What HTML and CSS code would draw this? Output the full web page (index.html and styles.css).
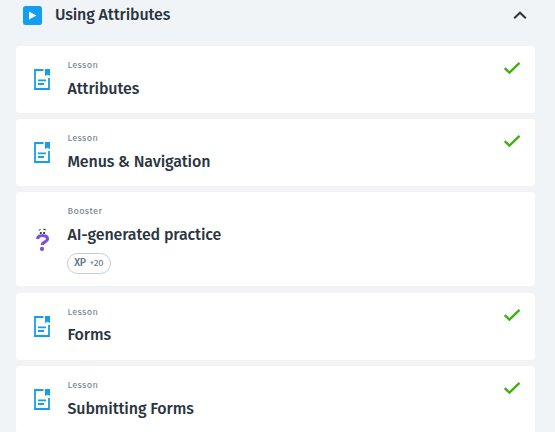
FILE: index.html
```
<!DOCTYPE html>
<html lang="en">
<head>
<meta charset="utf-8">
<title>Using Attributes</title>
<link rel="stylesheet" href="styles.css">
</head>
<body>
<svg class="defs" width="0" height="0" aria-hidden="true">
  <symbol id="doc" viewBox="0 0 16 21">
    <path d="M9.5 1H1v19h14V9" fill="none" stroke="currentColor" stroke-width="1.8"/>
    <path d="M11 0h5v7l-2.5-1.2L11 7z" fill="currentColor"/>
    <path d="M4 11.3h8M4 15h6" fill="none" stroke="currentColor" stroke-width="1.8"/>
  </symbol>
  <symbol id="check" viewBox="0 0 18 14">
    <path d="M1.7 7.2 6.4 11.6 16.5 1.8" fill="none" stroke="currentColor" stroke-width="2.3"/>
  </symbol>
</svg>
<header class="section-header">
  <svg class="play" viewBox="0 0 19 19"><rect width="19" height="19" rx="2.5" fill="#149ef2"/><path d="M6 5.5v8l7.3-4z" fill="#fff"/></svg>
  <h1 class="title">Using Attributes</h1>
  <svg class="chevron" viewBox="0 0 14 9"><path d="M1.2 7.3 7 1.7l5.8 5.6" fill="none" stroke="currentColor" stroke-width="2"/></svg>
</header>
<main class="cards">
  <article class="card">
    <svg class="icon"><use href="#doc"/></svg>
    <div class="body"><p class="kind">Lesson</p><h2 class="title">Attributes</h2></div>
    <svg class="check"><use href="#check"/></svg>
  </article>
  <article class="card">
    <svg class="icon"><use href="#doc"/></svg>
    <div class="body"><p class="kind">Lesson</p><h2 class="title">Menus &amp; Navigation</h2></div>
    <svg class="check"><use href="#check"/></svg>
  </article>
  <article class="card booster">
    <svg class="icon question" viewBox="0 0 16 24">
      <path d="M3.6 11C3.8 8.5 5.6 7.5 8.3 7.5c3.4 0 5.2 1.2 5.2 3.4 0 3.2-5.2 2.8-5.2 6.2" fill="none" stroke="#804fd8" stroke-width="3.2"/>
      <circle cx="8" cy="20.9" r="2.1" fill="#804fd8"/>
      <circle cx="6.6" cy="4.6" r="2" fill="#fff"/><circle cx="10.3" cy="4.6" r="2" fill="#fff"/>
      <path d="M4.8 2.4 6.6 1.3M9.4 1.1l2.5.8" stroke="#20242c" stroke-width="1"/>
      <circle cx="6.8" cy="5" r="1.1" fill="#20242c"/><circle cx="10.1" cy="5" r="1.1" fill="#20242c"/>
    </svg>
    <div class="body"><p class="kind">Booster</p><h2 class="title">AI-generated practice</h2>
      <div class="xp"><b class="xp-label">XP</b><span class="xp-value">+20</span></div></div>
  </article>
  <article class="card">
    <svg class="icon"><use href="#doc"/></svg>
    <div class="body"><p class="kind">Lesson</p><h2 class="title title-forms">Forms</h2></div>
    <svg class="check"><use href="#check"/></svg>
  </article>
  <article class="card">
    <svg class="icon"><use href="#doc"/></svg>
    <div class="body"><p class="kind">Lesson</p><h2 class="title">Submitting Forms</h2></div>
    <svg class="check"><use href="#check"/></svg>
  </article>
</main>
</body>
</html>
```
FILE: styles.css
```
* { box-sizing: border-box; }
body { margin: 0; height: 432px; overflow: hidden; background: #f0f4f7; color: #2b3540; font-family: "Fira Sans", "Noto Sans", sans-serif; }
h1, h2, p { margin: 0; }
.defs { display: none; }
.section-header { display: flex; align-items: center; height: 30px; padding: 0 28px 0 23px; }
.play { width: 19px; height: 19px; margin-right: 13px; }
.title { font-size: 16px; line-height: 24px; font-weight: 500; letter-spacing: -0.14px; white-space: nowrap; }
.title-forms { margin-top: -1px; }
.chevron { width: 14px; height: 9px; margin-left: auto; }
.cards { display: flex; flex-direction: column; gap: 6px; margin: 16px 20px 0 16px; }
.card { display: flex; flex: none; height: 67.2px; padding: 0 14px 0 18px; border-radius: 4px; background: #fff; }
.booster { height: 93.8px; margin-bottom: 0.4px; }
.icon { flex: none; width: 16px; height: 21px; margin: 23px 17.5px 0 0; color: #149ef2; }
.question { height: 24px; margin-top: 36px; }
.body { padding-top: 12px; }
.kind { height: 14px; margin-bottom: 5px; font-size: 9.2px; line-height: 14px; letter-spacing: 0.35px; color: #6a7b90; }
.check { width: 18px; height: 14px; margin: 15px 0 0 auto; color: #3fb00f; }
.xp { display: flex; align-items: center; justify-content: center; gap: 4px; width: 44px; height: 21px; margin: 6px 0 0 -0.5px; border: 1px solid #c3ccd9; border-radius: 11px; color: #62748a; }
.xp-label { font-size: 10.5px; line-height: 18px; font-weight: 500; letter-spacing: -0.5px; margin-top: -1px; }
.xp-value { font-size: 9.5px; line-height: 18px; letter-spacing: 0; margin-top: -1px; }
```
